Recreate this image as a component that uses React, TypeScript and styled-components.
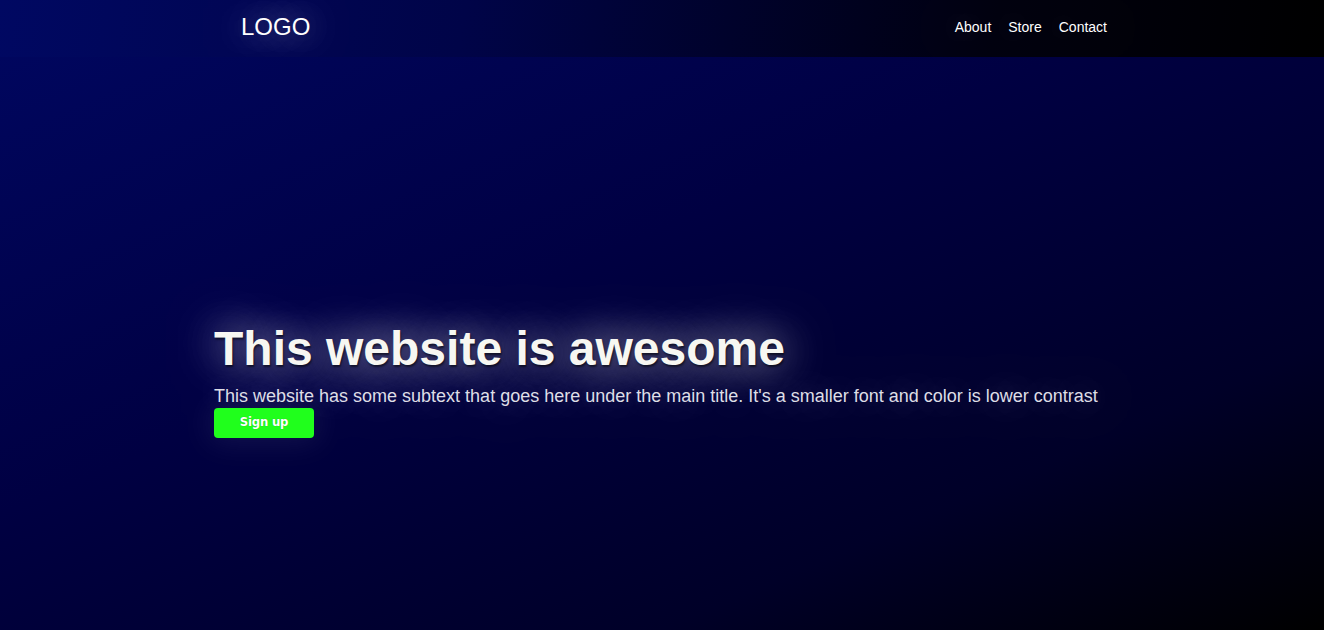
import React from "react";
import styled, { createGlobalStyle } from "styled-components";

const Global = createGlobalStyle`
  html, body { margin: 0; padding: 0; background: #000; }
  body { font-family: "Liberation Sans", Arial, sans-serif; overflow: hidden; }
  * { box-sizing: border-box; }
`;

const Page = styled.div`
  width: 100%;
  height: 630px;
  display: flex;
  flex-direction: column;
`;

const Header = styled.header`
  height: 57px;
  flex: none;
  background: linear-gradient(100deg, #000862 0%, #000448 35%, #00000f 75%, #000000 100%);
`;

const Container = styled.div`
  width: 896px;
  margin: 0 auto;
`;

const HeaderInner = styled(Container)`
  height: 100%;
  display: flex;
  align-items: center;
  justify-content: space-between;
  padding-bottom: 3px;
`;

const Logo = styled.div`
  margin-left: 27px;
  font-size: 24px;
  color: #fff;
  line-height: 28px;
  text-shadow: 0 0 40px rgba(255, 255, 255, 0.6), 0 0 30px rgba(255, 255, 255, 0.35);
`;

const Nav = styled.nav`
  display: flex;
  gap: 17px;
  margin-right: 3px;
`;

const NavLink = styled.a`
  color: #fff;
  font-size: 14px;
  text-decoration: none;
  line-height: 18px;
  text-shadow: 0 0 40px rgba(255, 255, 255, 0.6), 0 0 30px rgba(255, 255, 255, 0.3);
`;

const Hero = styled.main`
  flex: 1;
  background: linear-gradient(to bottom right, #00065e 0%, #000042 40%, #000028 75%, #000000 100%);
`;

const HeroInner = styled(Container)`
  padding-top: 264px;
  display: flex;
  flex-direction: column;
  align-items: flex-start;
`;

const Title = styled.h1`
  margin: 0;
  font-size: 48px;
  font-weight: bold;
  color: #f7f7f2;
  text-shadow: 1px 2px 2px rgba(0, 0, 0, 0.55), 0 0 50px rgba(255, 255, 255, 0.6),
    0 0 40px rgba(255, 255, 255, 0.4);
`;

const Subtext = styled.p`
  margin: 10px 0 1px;
  font-size: 18px;
  color: #dedee6;
  text-shadow: 0 0 40px rgba(255, 255, 255, 0.6), 0 0 30px rgba(255, 255, 255, 0.3);
`;

const SignUp = styled.button`
  width: 100px;
  height: 30px;
  border: none;
  border-radius: 4px;
  background: #20ff1c;
  color: #fff;
  font-family: "DejaVu Sans Condensed", "DejaVu Sans", sans-serif;
  font-weight: bold;
  font-size: 13px;
  letter-spacing: -0.2px;
  padding: 0 0 3px;
  box-shadow: 0 0 30px 4px rgba(255, 255, 255, 0.08);
  text-shadow: 0 0 1px rgba(0, 0, 0, 0.3);
  cursor: pointer;
`;

export default function App() {
  return (
    <Page>
      <Global />
      <Header>
        <HeaderInner>
          <Logo>LOGO</Logo>
          <Nav>
            <NavLink href="#">About</NavLink>
            <NavLink href="#">Store</NavLink>
            <NavLink href="#">Contact</NavLink>
          </Nav>
        </HeaderInner>
      </Header>
      <Hero>
        <HeroInner>
          <Title>This website is awesome</Title>
          <Subtext>
            This website has some subtext that goes here under the main title. It's a smaller font and color is lower contrast
          </Subtext>
          <SignUp>Sign up</SignUp>
        </HeroInner>
      </Hero>
    </Page>
  );
}
